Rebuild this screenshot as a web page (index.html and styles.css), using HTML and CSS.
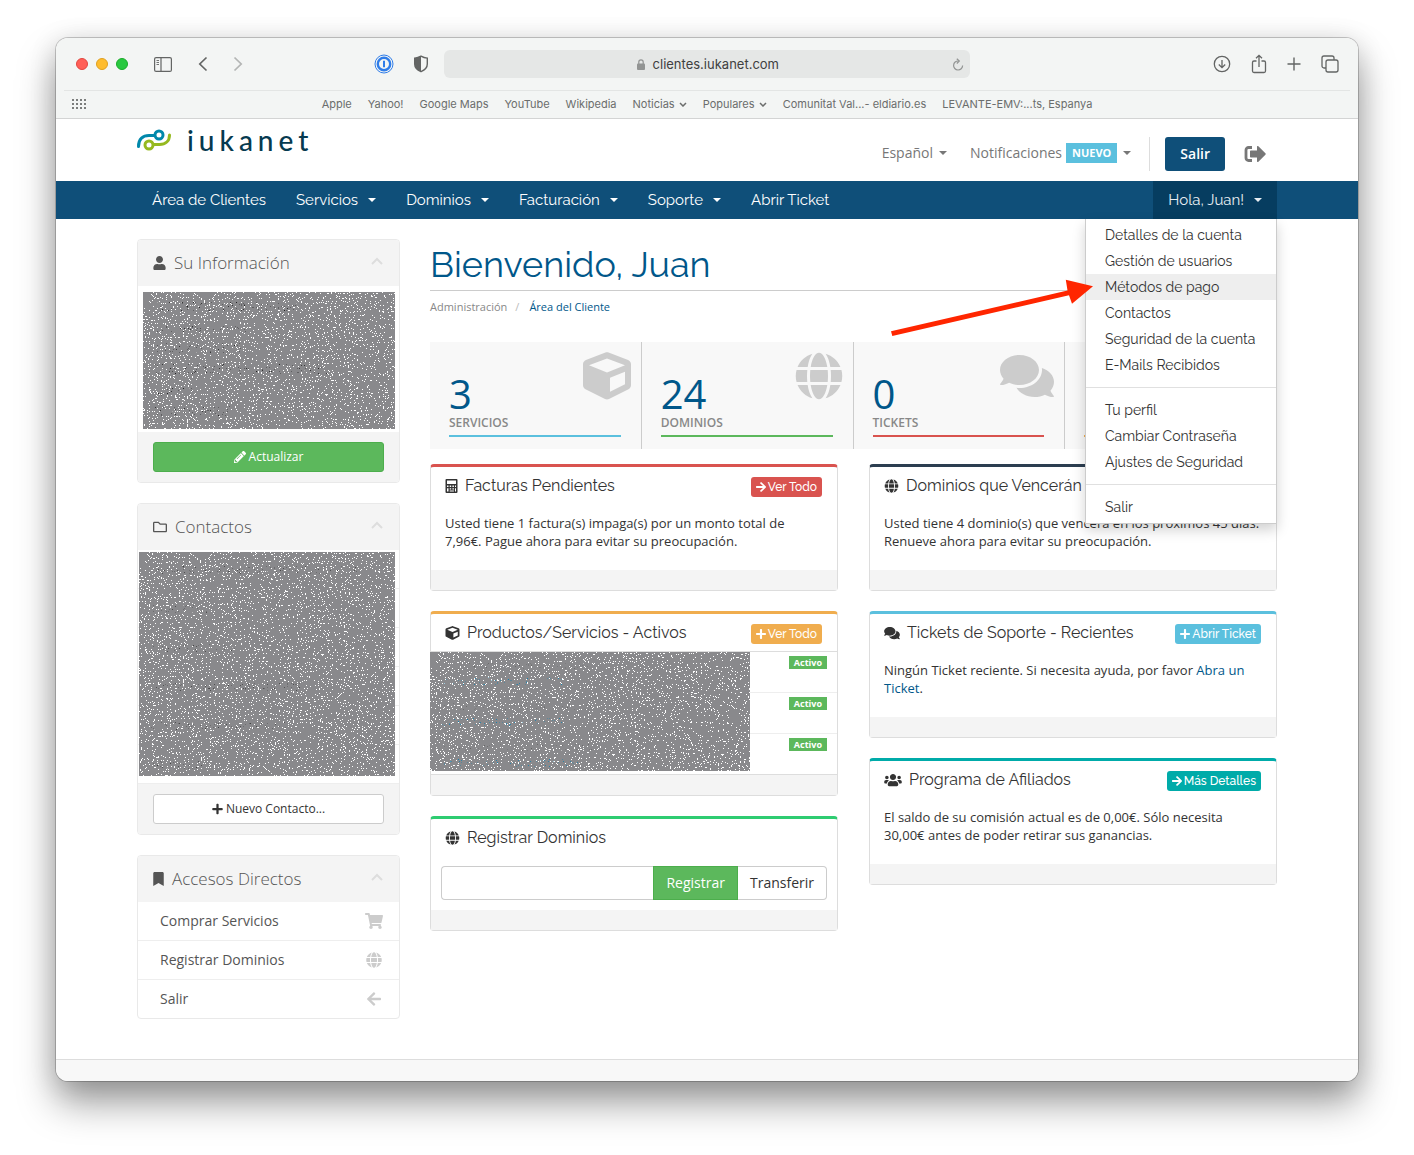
FILE: index.html
```html
<!DOCTYPE html>
<html lang="es">
<head>
<meta charset="utf-8">
<meta name="viewport" content="width=device-width, initial-scale=1">
<title>iukanet - Área del Cliente</title>
<link rel="stylesheet" href="styles.css">
</head>
<body>
<svg class="defs" aria-hidden="true">
  <defs>
    <filter id="speckle" x="0" y="0" width="100%" height="100%" color-interpolation-filters="sRGB">
      <feTurbulence type="fractalNoise" baseFrequency="0.77" numOctaves="3" seed="7"/>
      <feColorMatrix values="1 0 0 0 -.07  1 0 0 0 -.07  1 0 0 0 -.07  0 0 0 0 1"/>
      <feComponentTransfer>
        <feFuncR type="discrete" tableValues=".54 .54 .54 .54 .54 .54 .54 .54 .54 .54 .54 .54 1 1 1 1 1 1 1 1"/>
        <feFuncG type="discrete" tableValues=".54 .54 .54 .54 .54 .54 .54 .54 .54 .54 .54 .54 1 1 1 1 1 1 1 1"/>
        <feFuncB type="discrete" tableValues=".55 .55 .55 .55 .55 .55 .55 .55 .55 .55 .55 .55 1 1 1 1 1 1 1 1"/>
      </feComponentTransfer>
    </filter>
    <filter id="dots" x="0" y="0" width="100%" height="100%" color-interpolation-filters="sRGB">
      <feTurbulence type="fractalNoise" baseFrequency="0.77" numOctaves="3" seed="21"/>
      <feColorMatrix values="0 0 0 0 0  0 0 0 0 0  0 0 0 0 0  1 0 0 0 -.05"/>
      <feComponentTransfer result="spots">
        <feFuncA type="discrete" tableValues="0 0 0 0 0 0 0 0 0 0 0 0 0 .4 .8 1 1 1 1 1"/>
      </feComponentTransfer>
      <feComposite in="SourceGraphic" in2="spots" operator="in"/>
    </filter>
  </defs>
  <symbol id="i-globe" viewBox="0 0 496 512"><path d="M336.5 160C322 70.7 287.8 8 248 8s-74 62.7-88.5 152h177zM152 256c0 22.2 1.2 43.5 3.3 64h185.3c2.1-20.5 3.3-41.8 3.3-64s-1.2-43.5-3.3-64H155.3c-2.1 20.5-3.3 41.8-3.3 64zm324.7-96c-28.6-67.9-86.5-120.4-158-141.6 24.4 33.8 41.2 84.7 50 141.6h108zM177.2 18.4C105.8 39.6 47.8 92.1 19.3 160h108c8.7-56.9 25.5-107.8 49.9-141.6zM487.4 192H372.7c2.1 21 3.3 42.5 3.3 64s-1.2 43-3.3 64h114.6c5.5-20.5 8.6-41.8 8.6-64s-3.1-43.5-8.5-64zM120 256c0-21.5 1.2-43 3.3-64H8.6C3.2 212.5 0 233.8 0 256s3.2 43.5 8.6 64h114.6c-2-21-3.2-42.5-3.2-64zm39.5 96c14.5 89.3 48.7 152 88.5 152s74-62.7 88.5-152h-177zm159.3 141.6c71.4-21.2 129.4-73.7 158-141.6h-108c-8.8 56.9-25.6 107.8-50 141.6zM19.3 352c28.6 67.9 86.5 120.4 158 141.6-24.4-33.8-41.2-84.7-50-141.6h-108z"/></symbol>
  <symbol id="i-cube" viewBox="0 0 512 512"><path d="M239.1 6.3l-208 78c-18.7 7-31.1 25-31.1 45v225.1c0 18.2 10.3 34.8 26.5 42.9l208 104c13.5 6.8 29.4 6.8 42.9 0l208-104c16.3-8.1 26.5-24.8 26.5-42.9V129.3c0-20-12.4-37.9-31.1-44.9l-208-78C262 2.2 250 2.2 239.1 6.3zM256 68.4l192 72v1.1l-192 78-192-78v-1.1l192-72zm32 356V275.5l160-65v133.9l-160 80z"/></symbol>
  <symbol id="i-comments" viewBox="0 0 576 512"><path d="M416 192c0-88.4-93.1-160-208-160S0 103.6 0 192c0 34.3 14.1 65.9 38 92-13.4 30.2-35.5 54.2-35.8 54.5-2.2 2.3-2.8 5.7-1.5 8.7S4.8 352 8 352c36.6 0 66.9-12.3 88.7-25 32.2 15.7 70.3 25 111.3 25 114.9 0 208-71.6 208-160zm122 220c23.9-26 38-57.7 38-92 0-66.9-53.5-124.2-129.3-148.1.9 6.6 1.3 13.3 1.3 20.1 0 105.9-107.7 192-240 192-10.8 0-21.3-.8-31.7-1.9C207.8 439.6 281.8 480 368 480c41 0 79.1-9.2 111.3-25 21.8 12.7 52.1 25 88.7 25 3.2 0 6.1-1.9 7.3-4.8 1.3-2.9.7-6.3-1.5-8.7-.3-.3-22.4-24.2-35.8-54.5z"/></symbol>
  <symbol id="i-user" viewBox="0 0 448 512"><path d="M224 256c70.7 0 128-57.3 128-128S294.7 0 224 0 96 57.3 96 128s57.3 128 128 128zm89.6 32h-16.7c-22.2 10.2-46.9 16-72.9 16s-50.6-5.8-72.9-16h-16.7C60.2 288 0 348.2 0 422.4V464c0 26.5 21.5 48 48 48h352c26.5 0 48-21.5 48-48v-41.6c0-74.2-60.2-134.4-134.4-134.4z"/></symbol>
  <symbol id="i-users" viewBox="0 0 640 512"><path d="M96 224c35.3 0 64-28.7 64-64s-28.7-64-64-64-64 28.7-64 64 28.7 64 64 64zm448 0c35.3 0 64-28.7 64-64s-28.7-64-64-64-64 28.7-64 64 28.7 64 64 64zm32 32h-64c-17.6 0-33.5 7.1-45.1 18.6 40.3 22.1 68.9 62 75.1 109.4h66c17.7 0 32-14.3 32-32v-32c0-35.3-28.7-64-64-64zm-256 0c61.9 0 112-50.1 112-112S381.9 32 320 32 208 82.1 208 144s50.1 112 112 112zm76.8 32h-8.3c-20.8 10-43.9 16-68.5 16s-47.6-6-68.5-16h-8.3C179.6 288 128 339.6 128 403.2V432c0 26.5 21.5 48 48 48h288c26.5 0 48-21.5 48-48v-28.8c0-63.6-51.6-115.2-115.2-115.2zm-223.7-13.4C161.5 263.1 145.6 256 128 256H64c-35.3 0-64 28.7-64 64v32c0 17.7 14.3 32 32 32h65.9c6.3-47.4 34.9-87.3 75.2-109.4z"/></symbol>
  <symbol id="i-bookmark" viewBox="0 0 384 512"><path d="M0 512V48C0 21.49 21.49 0 48 0h288c26.51 0 48 21.49 48 48v464L192 400 0 512z"/></symbol>
  <symbol id="i-folder" viewBox="0 0 512 512"><path d="M464 128H272l-54.63-54.63c-6-6-14.14-9.37-22.63-9.37H48C21.49 64 0 85.49 0 112v288c0 26.51 21.49 48 48 48h416c26.51 0 48-21.49 48-48V176c0-26.51-21.49-48-48-48zm0 272H48V112h140.12l54.63 54.63c6 6 14.14 9.37 22.63 9.37H464v224z"/></symbol>
  <symbol id="i-cart" viewBox="0 0 576 512"><path d="M528.12 301.319l47.273-208C578.806 78.301 567.391 64 551.99 64H159.208l-9.166-44.81C147.758 8.021 137.93 0 126.529 0H24C10.745 0 0 10.745 0 24v16c0 13.255 10.745 24 24 24h69.883l70.248 343.435C147.325 417.1 136 435.222 136 456c0 30.928 25.072 56 56 56s56-25.072 56-56c0-15.674-6.447-29.835-16.824-40h209.647C430.447 426.165 424 440.326 424 456c0 30.928 25.072 56 56 56s56-25.072 56-56c0-22.172-12.888-41.332-31.579-50.405l5.517-24.276c3.413-15.018-8.002-29.319-23.403-29.319H218.117l-6.545-32h293.145c11.206 0 20.92-7.754 23.403-18.681z"/></symbol>
  <symbol id="i-left" viewBox="0 0 448 512"><path d="M257.5 445.1l-22.2 22.2c-9.4 9.4-24.6 9.4-33.9 0L7 273c-9.4-9.4-9.4-24.6 0-33.9L201.4 44.7c9.4-9.4 24.6-9.4 33.9 0l22.2 22.2c9.5 9.5 9.3 25-.4 34.3L136.6 216H424c13.3 0 24 10.7 24 24v32c0 13.3-10.7 24-24 24H136.6l120.5 114.8c9.8 9.3 10 24.8.4 34.3z"/></symbol>
  <symbol id="i-right" viewBox="0 0 448 512"><path d="M190.5 66.9l22.2-22.2c9.4-9.4 24.6-9.4 33.9 0L441 239c9.4 9.4 9.4 24.6 0 33.9L246.6 467.3c-9.4 9.4-24.6 9.4-33.9 0l-22.2-22.2c-9.5-9.5-9.3-25 .4-34.3L311.4 296H24c-13.3 0-24-10.7-24-24v-32c0-13.3 10.7-24 24-24h287.4L190.9 101.2c-9.8-9.3-10-24.8-.4-34.3z"/></symbol>
  <symbol id="i-plus" viewBox="0 0 448 512"><path d="M416 208H272V64c0-17.67-14.33-32-32-32h-32c-17.67 0-32 14.33-32 32v144H32c-17.67 0-32 14.33-32 32v32c0 17.67 14.33 32 32 32h144v144c0 17.67 14.33 32 32 32h32c17.67 0 32-14.33 32-32V304h144c17.67 0 32-14.33 32-32v-32c0-17.67-14.33-32-32-32z"/></symbol>
  <symbol id="i-pencil" viewBox="0 0 512 512"><path d="M497.9 142.1l-46.1 46.1c-4.7 4.7-12.3 4.7-17 0l-111-111c-4.7-4.7-4.7-12.3 0-17l46.1-46.1c18.7-18.7 49.1-18.7 67.9 0l60.1 60.1c18.8 18.7 18.8 49.1 0 67.9zM284.2 99.8L21.6 362.4.4 483.9c-2.9 16.4 11.4 30.6 27.8 27.8l121.5-21.3 262.6-262.6c4.7-4.7 4.7-12.3 0-17l-111-111c-4.8-4.7-12.4-4.7-17.1 0zM124.1 339.9c-5.5-5.5-5.5-14.3 0-19.8l154-154c5.5-5.5 14.3-5.5 19.8 0s5.5 14.3 0 19.8l-154 154c-5.5 5.5-14.3 5.5-19.8 0zM88 424h48v36.3l-64.5 11.3-31.1-31.1L51.7 376H88v48z"/></symbol>
  <symbol id="i-calc" viewBox="0 0 12 14"><path fill-rule="evenodd" d="M1 0h10a1 1 0 0 1 1 1v12a1 1 0 0 1-1 1H1a1 1 0 0 1-1-1V1a1 1 0 0 1 1-1zM1.500 1.500v3.500h9V1.500zM1.500 6.500V8H3V6.500zM4.200 6.500V8h1.500V6.500zM6.900 6.500V8h1.500V6.500zM9.500 6.500V8h1V6.500zM1.500 9.200v3.300H3V9.200zM4.200 9.200v1.200h1.500V9.200zM6.900 9.200v1.200h1.500V9.200zM4.200 11.500v1h4.200v-1zM9.500 9.200v3.300h1V9.200z"/></symbol>
  <symbol id="i-up" viewBox="0 0 12 8"><path d="M1 7l5-5 5 5" fill="none" stroke="currentColor" stroke-width="2"/></symbol>
  <symbol id="i-down" viewBox="0 0 8 5"><path d="M1 1l3 3 3-3" fill="none" stroke="currentColor" stroke-width="1.500"/></symbol>
</svg>

<div class="window">
  <header class="chrome">
    <div class="toolbar">
      <div class="tools tools-start">
        <span class="light red"></span><span class="light amber"></span><span class="light green"></span>
        <svg class="tb-side" width="18" height="15" viewBox="0 0 18 15" fill="none" stroke="currentColor"><rect x=".6" y=".6" width="16.800" height="13.800" rx="1.500" stroke-width="1.200"/><path d="M7 1v13" stroke-width="1.200"/><path d="M2.500 3.500h2.500M2.500 5.500h2.500M2.500 7.500h2.500" stroke-width=".9"/></svg>
        <svg class="tb-back" width="10" height="16" viewBox="0 0 10 16" fill="none" stroke="currentColor" stroke-width="1.700"><path d="M8.500 1.500L1.800 8l6.700 6.500"/></svg>
        <svg class="tb-fwd" width="10" height="16" viewBox="0 0 10 16" fill="none" stroke="#b3b5b4" stroke-width="1.700"><path d="M1.500 1.500L8.200 8l-6.700 6.500"/></svg>
        <svg class="tb-pass" width="20" height="20" viewBox="0 0 20 20" fill="none" stroke="#2f7de9"><circle cx="10" cy="10" r="9" stroke-width="1"/><circle cx="10" cy="10" r="6.200" stroke-width="2.400"/><path d="M10 6.800v6.400" stroke-width="2"/></svg>
        <svg class="tb-shield" width="16" height="18" viewBox="0 0 16 18"><path d="M8 1.200c2 1.200 4 1.800 6.300 1.900v6c0 3.400-2.400 6-6.300 7.600-3.900-1.600-6.300-4.200-6.300-7.600v-6C4 3 6 2.400 8 1.200z" fill="none" stroke="currentColor" stroke-width="1.400"/><path d="M8 1.200v15.500c-3.900-1.600-6.300-4.200-6.300-7.600v-6C4 3 6 2.400 8 1.200z" fill="currentColor"/></svg>
      </div>
      <div class="address">
        <svg class="lock" width="8" height="11" viewBox="0 0 8 11"><rect y="4.500" width="8" height="6.500" rx="1" fill="#929493"/><path d="M1.800 5V3a2.200 2.200 0 0 1 4.400 0v2" fill="none" stroke="#929493" stroke-width="1.200"/></svg>
        <span>clientes.iukanet.com</span>
        <svg class="reload" width="12" height="13" viewBox="0 0 12 13" fill="none" stroke="#929493" stroke-width="1.200"><path d="M6.500 3A4.500 4.500 0 1 0 10.600 7.500"/><path d="M4.800 .8L7.300 3 4.800 5.500"/></svg>
      </div>
      <div class="tools tools-end">
        <svg width="18" height="18" viewBox="0 0 18 18" fill="none" stroke="currentColor" stroke-width="1.300"><circle cx="9" cy="9" r="7.700"/><path d="M9 5v7.500M5.800 9.500L9 12.700l3.200-3.200"/></svg>
        <svg width="16" height="20" viewBox="0 0 16 20" fill="none" stroke="currentColor" stroke-width="1.300"><path d="M5.500 7H3a1.500 1.500 0 0 0-1.500 1.500v8.500A1.500 1.500 0 0 0 3 18.500h10a1.500 1.500 0 0 0 1.500-1.500V8.500A1.500 1.500 0 0 0 13 7h-2.500M8 13V1.500M5 4.300l3-3 3 3"/></svg>
        <svg width="14" height="14" viewBox="0 0 14 14" fill="none" stroke="currentColor" stroke-width="1.400"><path d="M7 .5v13M.5 7h13"/></svg>
        <svg width="18" height="18" viewBox="0 0 18 18" fill="none" stroke="currentColor" stroke-width="1.300"><rect x="5" y="5" width="12" height="12" rx="2"/><path d="M5 13H3a2 2 0 0 1-2-2V3a2 2 0 0 1 2-2h8a2 2 0 0 1 2 2v2"/></svg>
      </div>
    </div>
    <div class="favorites">
      <svg width="14" height="10" viewBox="0 0 14 10" stroke="#7b7d7c" stroke-width="2" stroke-dasharray="2 2"><path d="M0 1h14M0 5h14M0 9h14"/></svg>
      <nav class="fav-list">
        <a href="#">Apple</a><a href="#">Yahoo!</a><a href="#">Google Maps</a><a href="#">YouTube</a><a href="#">Wikipedia</a>
        <a href="#">Noticias <svg width="8" height="5"><use href="#i-down"/></svg></a>
        <a href="#">Populares <svg width="8" height="5"><use href="#i-down"/></svg></a>
        <a href="#">Comunitat Val...- eldiario.es</a><a href="#">LEVANTE-EMV:...ts, Espanya</a>
      </nav>
    </div>
  </header>

  <div class="site-header container">
    <a class="logo" href="#">
      <svg width="34" height="22" viewBox="0 0 34 22" fill="none" stroke-width="3"><path d="M1.500 17.500C1.500 10 6 6.500 12 6.500h5" stroke="#0088ab" stroke-linecap="round"/><circle cx="22" cy="6" r="4" stroke="#0088ab"/><path d="M32.500 6c0 6-4 9.500-10 9.500H17" stroke="#95b91f" stroke-linecap="round"/><circle cx="12" cy="16" r="4" stroke="#95b91f"/></svg>
      <span>iukanet</span>
    </a>
    <div class="top-nav">
      <button class="plain" type="button">Español <i class="caret"></i></button>
      <button class="plain" type="button">Notificaciones <span class="new-badge">NUEVO</span> <i class="caret"></i></button>
      <div class="session">
        <a class="exit" href="#">Salir</a>
        <a href="#" aria-label="Cerrar sesión"><svg width="22" height="18" viewBox="0 0 22 18"><path d="M8 2.500H4.500a2.500 2.500 0 0 0-2.500 2.500v8a2.500 2.500 0 0 0 2.500 2.500H8" fill="none" stroke="#777" stroke-width="2.800"/><path d="M6 6.200a.8.8 0 0 1 .8-.8H13V1.800a.8.8 0 0 1 1.400-.5l7 7a1 1 0 0 1 0 1.400l-7 7a.8.8 0 0 1-1.400-.5v-3.600H6.800a.8.8 0 0 1-.8-.8z" fill="#777"/></svg></a>
      </div>
    </div>
  </div>

  <nav class="main-nav">
    <div class="container nav-inner">
      <a href="#">Área de Clientes</a>
      <a href="#">Servicios <i class="caret"></i></a>
      <a href="#">Dominios <i class="caret"></i></a>
      <a href="#">Facturación <i class="caret"></i></a>
      <a href="#">Soporte <i class="caret"></i></a>
      <a href="#">Abrir Ticket</a>
      <div class="account">
        <button class="account-toggle" type="button">Hola, Juan! <i class="caret"></i></button>
        <ul class="menu">
          <li><a href="#">Detalles de la cuenta</a></li>
          <li><a href="#">Gestión de usuarios</a></li>
          <li class="active"><a href="#">Métodos de pago</a>
            <svg class="pointer" width="206" height="64" viewBox="888 276 206 64"><path d="M891 331.300L1067.500 290.500 1065.800 279.700 1093 286.300 1072 303.700 1069 295.300 892.300 336z" fill="#ff2600"/></svg></li>
          <li><a href="#">Contactos</a></li>
          <li><a href="#">Seguridad de la cuenta</a></li>
          <li><a href="#">E-Mails Recibidos</a></li>
          <li class="divider"></li>
          <li><a href="#">Tu perfil</a></li>
          <li><a href="#">Cambiar Contraseña</a></li>
          <li><a href="#">Ajustes de Seguridad</a></li>
          <li class="divider"></li>
          <li><a href="#">Salir</a></li>
        </ul>
      </div>
    </div>
  </nav>

  <div class="container content">
    <aside class="sidebar">
      <section class="side-panel">
        <h3><svg class="ic" width="13" height="14"><use href="#i-user"/></svg>Su Información<svg class="fold" width="12" height="8"><use href="#i-up"/></svg></h3>
        <div class="side-info">
          <svg class="redacted" width="100%" height="137"><rect width="100%" height="137" filter="url(#speckle)"/><path d="M12 10h144v9H12zM12 34h92v6H12zM12 51h92v10H12zM12 72h172v10H12zM12 96h40v8H12zM12 114h76v10H12z" fill="#222" filter="url(#dots)"/></svg>
        </div>
        <div class="side-foot"><button class="btn btn-green" type="button"><svg width="12" height="12"><use href="#i-pencil"/></svg> Actualizar</button></div>
      </section>
      <section class="side-panel">
        <h3><svg class="ic" width="14" height="14"><use href="#i-folder"/></svg>Contactos<svg class="fold" width="12" height="8"><use href="#i-up"/></svg></h3>
        <div class="side-contacts">
          <svg class="redacted" width="100%" height="224"><rect width="100%" height="224" filter="url(#speckle)"/><path d="M12 14h206v8H12zM12 53h58v8H12zM12 92h84v8H12zM12 131h150v8H12zM12 170h140v8H12zM12 209h62v8H12z" fill="#444" filter="url(#dots)"/></svg>
        </div>
        <div class="side-foot"><button class="btn btn-white" type="button"><svg width="11" height="12"><use href="#i-plus"/></svg> Nuevo Contacto...</button></div>
      </section>
      <section class="side-panel">
        <h3><svg class="ic" width="11" height="14"><use href="#i-bookmark"/></svg>Accesos Directos<svg class="fold" width="12" height="8"><use href="#i-up"/></svg></h3>
        <nav class="shortcuts">
          <a href="#">Comprar Servicios<svg width="18" height="16"><use href="#i-cart"/></svg></a>
          <a href="#">Registrar Dominios<svg width="18" height="16"><use href="#i-globe"/></svg></a>
          <a href="#">Salir<svg width="18" height="16"><use href="#i-left"/></svg></a>
        </nav>
      </section>
    </aside>

    <main class="main">
      <h1>Bienvenido, Juan</h1>
      <ol class="crumbs"><li><a href="#">Administración</a></li><li class="here">Área del Cliente</li></ol>

      <div class="stats">
        <a class="stat sky" href="#"><svg width="48" height="48"><use href="#i-cube"/></svg><b>3</b><span>SERVICIOS</span></a>
        <a class="stat green" href="#"><svg width="48" height="48"><use href="#i-globe"/></svg><b>24</b><span>DOMINIOS</span></a>
        <a class="stat red" href="#"><svg width="54" height="48"><use href="#i-comments"/></svg><b>0</b><span>TICKETS</span></a>
        <a class="stat gold" href="#" aria-label="Facturas"></a>
      </div>

      <div class="columns">
        <div class="column">
          <section class="card red">
            <h3><svg width="13" height="14"><use href="#i-calc"/></svg>Facturas Pendientes<a class="mini" href="#"><svg width="10" height="12"><use href="#i-right"/></svg> Ver Todo</a></h3>
            <p>Usted tiene 1 factura(s) impaga(s) por un monto total de 7,96€. Pague ahora para evitar su preocupación.</p>
            <footer></footer>
          </section>
          <section class="card gold">
            <h3><svg width="15" height="14"><use href="#i-cube"/></svg>Productos/Servicios - Activos<a class="mini" href="#"><svg width="10" height="12"><use href="#i-plus"/></svg> Ver Todo</a></h3>
            <ul class="products">
              <li><span class="state">Activo</span></li>
              <li><span class="state">Activo</span></li>
              <li><span class="state">Activo</span></li>
              <li class="cover"><svg class="redacted" width="320" height="119"><rect width="320" height="119" filter="url(#speckle)"/><path d="M12 11h150v6H12zM12 51h150v7H12zM12 92h150v7H12z" fill="#666" filter="url(#dots)"/><path d="M12 25h120v8H12zM12 66h120v8H12zM12 107h140v8H12z" fill="#1583b0" filter="url(#dots)"/></svg></li>
            </ul>
            <footer></footer>
          </section>
          <section class="card mint">
            <h3><svg width="15" height="14"><use href="#i-globe"/></svg>Registrar Dominios</h3>
            <form class="domain"><input type="text" aria-label="Dominio"><button class="reg" type="button">Registrar</button><button class="tra" type="button">Transferir</button></form>
            <footer></footer>
          </section>
        </div>
        <div class="column">
          <section class="card navy">
            <h3><svg width="15" height="14"><use href="#i-globe"/></svg>Dominios que Vencerán</h3>
            <p>Usted tiene 4 dominio(s) que vencerá en los próximos 45 días. Renueve ahora para evitar su preocupación.</p>
            <footer></footer>
          </section>
          <section class="card sky">
            <h3><svg width="16" height="14"><use href="#i-comments"/></svg>Tickets de Soporte - Recientes<a class="mini" href="#"><svg width="10" height="12"><use href="#i-plus"/></svg> Abrir Ticket</a></h3>
            <p>Ningún Ticket reciente. Si necesita ayuda, por favor <a href="#">Abra un Ticket</a>.</p>
            <footer></footer>
          </section>
          <section class="card teal">
            <h3><svg width="18" height="14"><use href="#i-users"/></svg>Programa de Afiliados<a class="mini" href="#"><svg width="10" height="12"><use href="#i-right"/></svg> Más Detalles</a></h3>
            <p>El saldo de su comisión actual es de 0,00€. Sólo necesita 30,00€ antes de poder retirar sus ganancias.</p>
            <footer></footer>
          </section>
        </div>
      </div>
    </main>
  </div>
  <footer class="site-footer"></footer>
</div>
</body>
</html>
```
FILE: styles.css
```css
* { box-sizing: border-box; }

body {
  margin: 0;
  padding: 38px 56px 74px;
  background: #fff;
  color: #333;
  font-family: "Open Sans", sans-serif;
  font-size: 13px;
  line-height: 18px;
}

a { color: #00578a; text-decoration: none; }
button, input { font: inherit; }
svg { flex: none; }
svg:not([fill]) { fill: currentColor; }
h1, h3, ul, ol, p { margin: 0; padding: 0; font-weight: 400; }
ul, ol { list-style: none; }
.defs { position: absolute; width: 0; height: 0; }

.window {
  display: flex;
  flex-direction: column;
  min-height: calc(100vh - 112px);
  border-radius: 12px;
  background: #fff;
  box-shadow: 0 0 0 1px rgba(0, 0, 0, .2), 0 22px 38px rgba(0, 0, 0, .38), 0 4px 28px rgba(0, 0, 0, .14);
}

.container {
  width: 100%;
  max-width: 1170px;
  margin: 0 auto;
  padding: 0 15px;
}

/* Browser frame */
.chrome {
  border-radius: 12px 12px 0 0;
  border-bottom: 1px solid #d3d4d4;
  background: #f3f5f4;
  color: #636564;
  font-family: Inter, sans-serif;
}
.toolbar {
  display: grid;
  grid-template-columns: 1fr minmax(200px, 526px) 1fr;
  align-items: center;
  height: 52px;
  margin: 0 8px;
}
.tools { display: flex; align-items: center; }
.tools-start { padding-left: 12px; padding-right: 15px; }
.tools-end { justify-content: flex-end; gap: 20px; padding-right: 11px; }
.light { width: 12px; height: 12px; margin-right: 8px; border-radius: 50%; }
.light.red { background: #ff5f57; border: 1px solid #e2463f; }
.light.amber { background: #febc2e; border: 1px solid #e0a01f; }
.light.green { background: #28c840; border: 1px solid #1aab29; }
.tb-side { margin-left: 18px; }
.tb-back { margin-left: 26px; }
.tb-fwd { margin-left: 25px; }
.tb-pass { margin-left: auto; margin-right: 19px; }
.address {
  display: flex;
  align-items: center;
  gap: 8px;
  height: 28px;
  padding-right: 6px;
  border-radius: 6px;
  background: #e5e7e6;
  color: #3f4040;
}
.lock { margin-left: auto; }
.reload { margin-left: 165px; }
.favorites {
  display: grid;
  grid-template-columns: 1fr auto 1fr;
  align-items: center;
  height: 28px;
  margin: 0 8px;
  padding: 0 8px 2px;
  border-top: 1px solid #e3e5e4;
  font-size: 11px;
}
.fav-list { display: flex; gap: 16px; }
.fav-list a { color: #6b6d6c; white-space: nowrap; }
.fav-list svg { margin-left: 1px; vertical-align: 1px; }

/* Site header */
.site-header { display: flex; justify-content: space-between; height: 62px; }
.logo { display: flex; gap: 16px; height: 42px; align-items: center; color: #063a50; font: 500 28px/42px Lato, sans-serif; }
.logo span { letter-spacing: 5px; }
.top-nav { display: flex; align-items: center; gap: 23px; height: 70px; padding-right: 11px; }
.plain { display: flex; align-items: center; gap: 4px; padding: 0 0 2px; border: 0; background: none; color: #777; font-size: 14px; white-space: nowrap; }
.caret { width: 8px; height: 4px; margin-left: 2px; border: 4px solid transparent; border-top-color: currentColor; border-bottom: 0; }
.new-badge { padding: 1px 6px; background: #5bc0de; color: #fff; font-size: 11px; font-weight: 700; }
.session { display: flex; align-items: center; gap: 19px; height: 34px; margin-left: -5px; padding-left: 15px; border-left: 1px solid #ddd; }
.session svg { display: block; }
.exit { padding: 8px 15px; border-radius: 3px; background: #0f4f79; color: #fff; font-size: 14px; font-weight: 600; }

.main-nav { background: #0f4f79; font: 15px/38px Raleway, Lato, sans-serif; }
.nav-inner { display: flex; }
.nav-inner > a { display: flex; align-items: center; gap: 8px; padding: 0 15px; color: #fff; white-space: nowrap; }
.account { position: relative; margin-left: auto; }
.account-toggle { display: flex; align-items: center; gap: 8px; height: 38px; padding: 0 15px; border: 0; background: #063d60; color: #e8eef2; white-space: nowrap; }
.menu {
  position: absolute;
  z-index: 5;
  top: 100%;
  right: 0;
  width: 192px;
  padding: 3px 0;
  border: 1px solid #ccc;
  border-top: 0;
  background: #fff;
  box-shadow: 0 6px 12px rgba(0, 0, 0, .18);
  font-size: 14px;
  line-height: 26px;
}
.menu li { position: relative; }
.menu a { display: block; padding: 0 19px; color: #333; white-space: nowrap; }
.menu .active { background: #eee; }
.menu .divider { height: 1px; margin: 9px 0; background: #e0e0e0; }
.pointer { position: absolute; top: 2px; right: 182px; }

/* Content */
.content { display: grid; grid-template-columns: 263px minmax(0, 1fr); gap: 30px; padding-top: 20px; padding-bottom: 40px; flex: 1; align-items: start; }
.sidebar { display: grid; gap: 20px; }
.side-panel { overflow: hidden; border: 1px solid #e9e9e9; border-radius: 4px; }
.side-panel h3 { display: flex; align-items: center; height: 46px; padding: 0 16px 0 15px; background: #f4f4f4; color: #555; font-size: 17px; font-weight: 300; }
.side-panel .ic { margin-right: 8px; }
.side-panel .fold { margin-left: auto; margin-bottom: 4px; color: #ddd; }
.redacted { display: block; }
.side-info { padding: 6px 4px 3px 5px; }
.side-contacts { padding: 2px 4px 8px 1px; background: repeating-linear-gradient(#fff 0 38px, #eee 38px 39px); }
.side-foot { padding: 10px 15px; background: #f4f4f4; }
.btn { display: flex; align-items: center; justify-content: center; gap: 3px; width: 100%; height: 30px; border-radius: 3px; font-size: 12px; }
.btn-green { border: 1px solid #4cae4c; background: #5cb85c; color: #fff; }
.btn-white { border: 1px solid #ccc; background: #fff; color: #333; }
.shortcuts a { display: flex; align-items: center; justify-content: space-between; height: 39px; padding: 0 16px 0 22px; border-bottom: 1px solid #eee; color: #555; font-size: 14px; }
.shortcuts a:last-child { height: 38px; border: 0; }
.shortcuts svg { color: #ccc; }

h1 { height: 52px; border-bottom: 1px solid #ccc; color: #00578a; font: 36px/50px Raleway, Lato, sans-serif; }
.crumbs { display: flex; height: 51px; padding-top: 7px; font-size: 11px; }
.crumbs a { color: #888; }
.here { color: #00578a; }
.here::before { content: "/"; padding: 0 10px 0 8px; color: #bbb; }

.sky { --accent: #5bc0de; }
.green { --accent: #5cb85c; }
.red { --accent: #d9534f; }
.gold { --accent: #f0ad4e; }
.mint { --accent: #2ecc71; }
.navy { --accent: #2c3e50; }
.teal { --accent: #00aba9; }

.stats { display: grid; grid-template-columns: repeat(4, 1fr); }
.stat { position: relative; display: flex; flex-direction: column; height: 107px; padding: 30px 20px 12px 19px; background: #f8f8f8; border-right: 1px solid #ccc; }
.stat:last-child { border-right: 0; }
.stat svg { position: absolute; top: 10px; right: 10px; color: #ccc; }
.stat b { font-size: 40px; line-height: 44px; font-weight: 400; }
.stat span { color: #888; font-size: 12px; line-height: 14px; font-weight: 600; }
.stat::after { content: ""; height: 2px; margin-top: auto; background: var(--accent); }

.columns { display: grid; grid-template-columns: repeat(2, minmax(0, 1fr)); gap: 31px; padding-top: 15px; align-items: start; }
.column { display: grid; gap: 20px; }
.card { border: 1px solid #ddd; border-top: 3px solid var(--accent); border-radius: 4px; }
.card h3 { display: flex; align-items: center; height: 37px; padding: 0 15px 0 14px; font: 16px/20px Raleway, Lato, sans-serif; }
.card h3 > svg { margin-right: 7px; }
.card p { padding: 10px 14px 20px; }
.card > footer { height: 20px; background: #f4f4f4; }
.mini { display: flex; align-items: center; gap: 2px; height: 20px; margin: 3px 0 0 auto; padding: 0 5px; border-radius: 3px; background: var(--accent); color: #fff; font-size: 12px; font-weight: 500; white-space: nowrap; }

.products { position: relative; border: solid #ddd; border-width: 1px 0; }
.products li { display: flex; justify-content: flex-end; height: 41px; padding: 4px 10px; border-bottom: 1px solid #eee; }
.products li:nth-child(3) { height: 40px; border: 0; }
.products .cover { position: absolute; top: 0; left: -1px; height: auto; padding: 0; border: 0; }
.state { height: 13px; padding: 0 5px; background: #5cb85c; color: #fff; font-size: 9px; line-height: 13px; font-weight: 700; }

.domain { display: flex; padding: 10px; }
.domain input { flex: 1; min-width: 0; height: 34px; border: 1px solid #ccc; border-right: 0; border-radius: 4px 0 0 4px; }
.domain button { height: 34px; padding: 0 12px; font-size: 14px; }
.reg { border: 1px solid #4cae4c; background: #5cb85c; color: #fff; font-weight: 500; }
.tra { border: 1px solid #ccc; border-left: 0; border-radius: 0 4px 4px 0; background: #fff; color: #333; }

.site-footer { height: 22px; border-top: 1px solid #ddd; border-radius: 0 0 12px 12px; background: #f8f8f8; }
```
